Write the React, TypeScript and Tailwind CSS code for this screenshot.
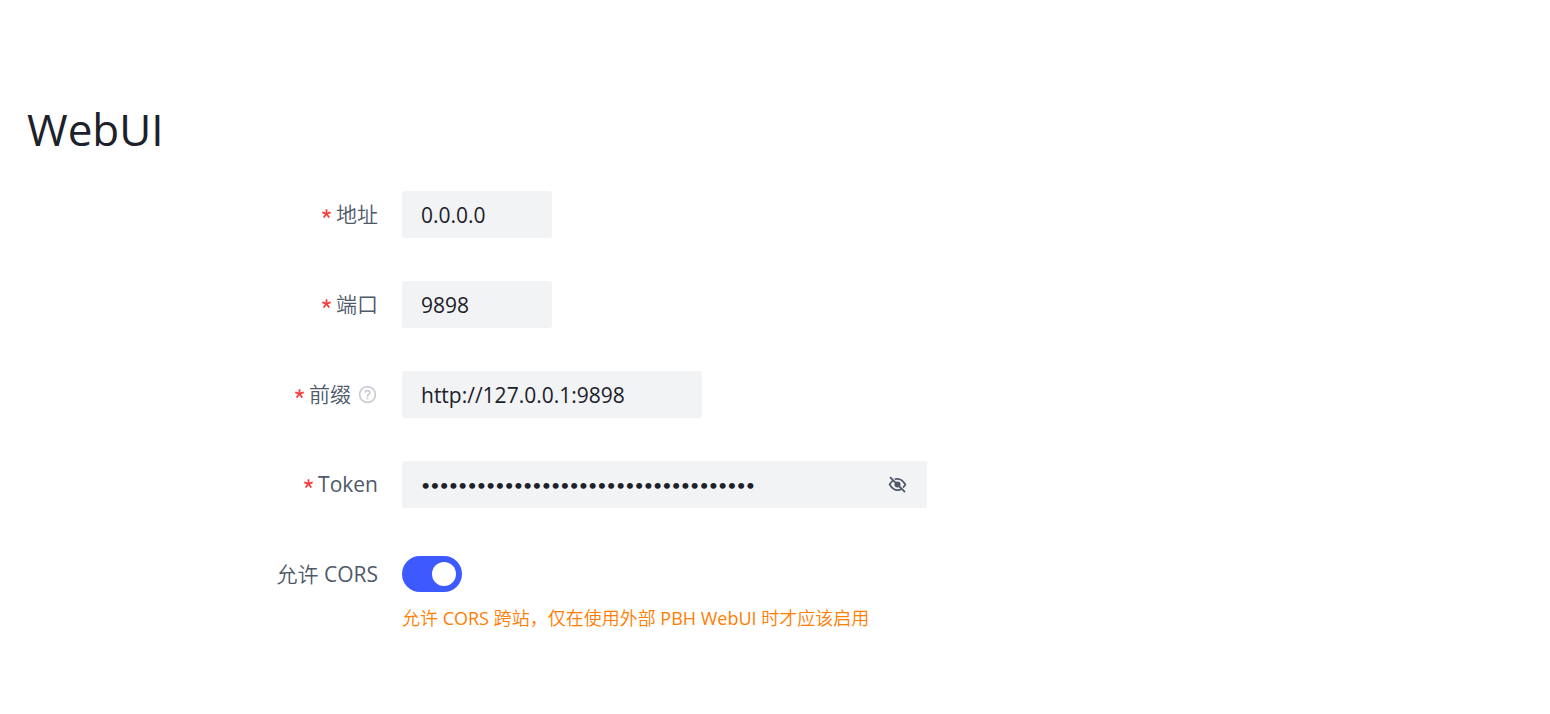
import { useState, type ReactNode } from "react";

function Asterisk() {
  return (
    <svg viewBox="0 0 1024 1024" className="mb-[2px] size-[9px] shrink-0 fill-[#f53f3f]" aria-hidden="true">
      <path d="M583.338667 17.066667c18.773333 0 34.133333 15.36 34.133333 34.133333v349.013333l313.344-101.888a34.133333 34.133333 0 0 1 43.008 22.016l42.154667 129.706667a34.133333 34.133333 0 0 1-21.845334 43.178667l-315.733333 102.4 208.896 287.744a34.133333 34.133333 0 0 1-7.509333 47.786666l-110.421334 80.213334a34.133333 34.133333 0 0 1-47.786666-7.509334L505.685333 706.218667 288.426667 1005.226667a34.133333 34.133333 0 0 1-47.786667 7.509333l-110.421333-80.213333a34.133333 34.133333 0 0 1-7.509334-47.786667l214.186667-295.253333L29.013333 489.813333a34.133333 34.133333 0 0 1-22.016-43.008l42.154667-129.877333a34.133333 34.133333 0 0 1 43.008-22.016l320.512 104.106667L412.672 51.2c0-18.773333 15.36-34.133333 34.133333-34.133333h136.533334z" />
    </svg>
  );
}

function QuestionCircle() {
  return (
    <svg viewBox="0 0 48 48" className="ml-[6px] size-[21px] shrink-0 fill-none stroke-[#c9cdd4] stroke-4" aria-hidden="true">
      <path d="M42 24c0 9.941-8.059 18-18 18S6 33.941 6 24 14.059 6 24 6s18 8.059 18 18Z" />
      <path d="M24.006 31v4.008m0-6.008L24 28c0-3 3-4 4.78-6.402C30.558 19.195 28.288 15 23.987 15c-4.014 0-5.382 2.548-5.388 4.514" />
    </svg>
  );
}

function EyeInvisible() {
  return (
    <svg viewBox="0 0 48 48" className="size-[21px] fill-none stroke-[#4e5969] stroke-4" aria-hidden="true">
      <path d="M14 14.5c-2.69 2-5.415 5.33-8 9.5 5.373 8.667 11.373 13 18 13 3.325 0 6.491-1.09 9.5-3.271M17.463 12.5C19 11 21.75 11 24 11c6.627 0 12.627 4.333 18 13-1.766 2.848-3.599 5.228-5.5 7.14" />
      <path d="M29 24a5 5 0 1 1-10 0 5 5 0 0 1 10 0Z" className="fill-[#4e5969]" />
      <path d="M6.852 7.103l34.294 34.294" />
    </svg>
  );
}

type FieldProps = {
  id: string;
  label: string;
  required?: boolean;
  help?: boolean;
  children: ReactNode;
};

function Field({ id, label, required, help, children }: FieldProps) {
  return (
    <div className="flex items-start">
      <label htmlFor={id} className="flex h-[47px] w-1/4 shrink-0 items-center justify-end pr-6 text-[21px] text-[#4e5969]">
        {required && <Asterisk />}
        <span className="ml-[5px]">{label}</span>
        {help && <QuestionCircle />}
      </label>
      <div className="min-w-0 flex-1">{children}</div>
    </div>
  );
}

const inputClass = "h-[47px] rounded-[3px] bg-[#f2f3f5] px-[19px] text-[#1d2129] outline-none";

export default function App() {
  const [visible, setVisible] = useState(false);
  const [cors, setCors] = useState(true);

  return (
    <main className="min-h-screen bg-white pt-[99px] pr-[23px] pb-20 pl-[27px] font-['Open_Sans','Noto_Sans_CJK_SC_DemiLight','Noto_Sans_CJK_SC',sans-serif]">
      <h1 className="text-[44px] leading-[60px] text-[#1d2129]">WebUI</h1>
      <form className="mt-8 flex flex-col gap-[43px]">
        <Field id="address" label="地址" required>
          <input id="address" defaultValue="0.0.0.0" className={`${inputClass} block w-[150px] text-[21px]`} />
        </Field>
        <Field id="port" label="端口" required>
          <input id="port" defaultValue="9898" inputMode="numeric" className={`${inputClass} block w-[150px] text-[21px]`} />
        </Field>
        <Field id="prefix" label="前缀" required help>
          <input id="prefix" defaultValue="http://127.0.0.1:9898" className={`${inputClass} block w-[300px] text-[21px]`} />
        </Field>
        <Field id="token" label="Token" required>
          <div className="flex w-[525px] items-center rounded-[3px] bg-[#f2f3f5] pr-[19px]">
            <input
              id="token"
              type={visible ? "text" : "password"}
              autoComplete="off"
              defaultValue="3f6c1b52-8a9d-4e07-b1c4-5d2e7f90a836"
              className={`${inputClass} min-w-0 flex-1 ${visible ? "text-[21px]" : "font-['Lato',sans-serif] text-[16px]"}`}
            />
            <button type="button" aria-label="Token" aria-pressed={visible} onClick={() => setVisible(!visible)}>
              <EyeInvisible />
            </button>
          </div>
        </Field>
        <Field id="cors" label="允许 CORS">
          <div className="flex h-[46px] items-center">
            <button
              id="cors"
              type="button"
              role="switch"
              aria-checked={cors}
              onClick={() => setCors(!cors)}
              className={`flex h-9 w-[60px] items-center rounded-full px-[6px] ${cors ? "justify-end bg-[#3c5aff]" : "justify-start bg-[#c9cdd4]"}`}
            >
              <span className="size-6 rounded-full bg-white" />
            </button>
          </div>
          <p className="mt-[6px] text-[18px] leading-[30px] text-[#ff7d00]">允许 CORS 跨站，仅在使用外部 PBH WebUI 时才应该启用</p>
        </Field>
      </form>
    </main>
  );
}
